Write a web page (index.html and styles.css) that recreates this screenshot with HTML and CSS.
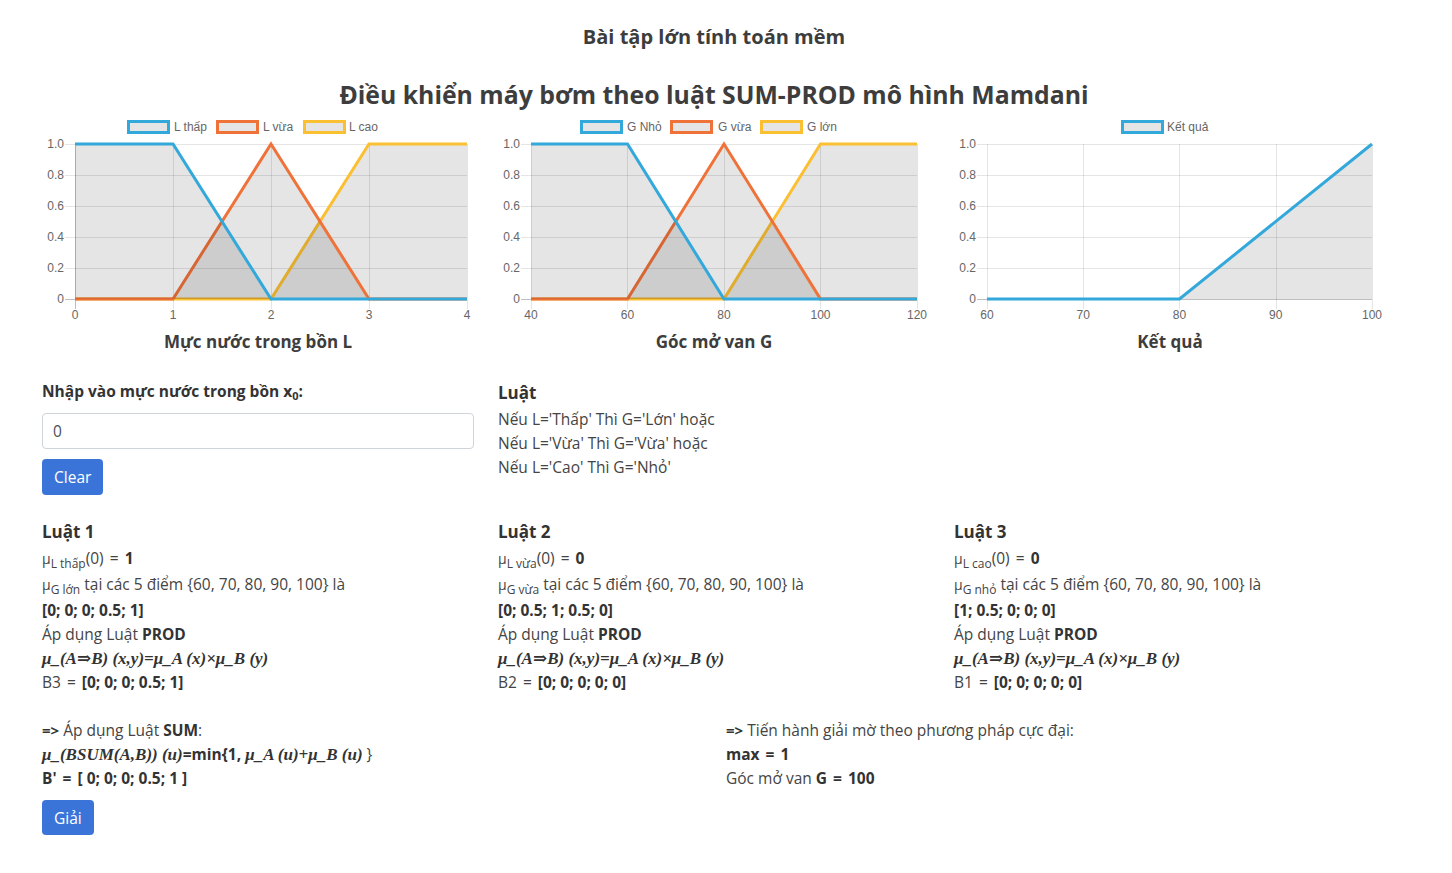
FILE: index.html
```html
<!DOCTYPE html>
<html lang="vi">
<head>
<meta charset="utf-8">
<title>Bài tập lớn tính toán mềm</title>
<link rel="stylesheet" href="styles.css">
</head>
<body>
<div class="page">
  <h5 class="title">Bài tập lớn tính toán mềm</h5>
  <h3 class="main-title">Điều khiển máy bơm theo luật SUM-PROD mô hình Mamdani</h3>

  <div class="row three charts">
    <div class="col">
      <svg class="chart" width="432" height="214" viewBox="0 0 432 214">
        <g class="grid">
          <line x1="23" y1="27.5" x2="425" y2="27.5"/>
          <line x1="23" y1="58.5" x2="425" y2="58.5"/>
          <line x1="23" y1="89.5" x2="425" y2="89.5"/>
          <line x1="23" y1="120.5" x2="425" y2="120.5"/>
          <line x1="23" y1="151.5" x2="425" y2="151.5"/>
          <line x1="131.5" y1="27" x2="131.5" y2="192"/>
          <line x1="229.5" y1="27" x2="229.5" y2="192"/>
          <line x1="327.5" y1="27" x2="327.5" y2="192"/>
          <line x1="425.5" y1="27" x2="425.5" y2="192"/>
        </g>
        <g class="zero">
          <line x1="23" y1="182.5" x2="425" y2="182.5"/>
          <line x1="33.5" y1="27" x2="33.5" y2="192"/>
        </g>
        <g class="ylab">
          <text x="22" y="31">1.0</text><text x="22" y="62">0.8</text><text x="22" y="93">0.6</text>
          <text x="22" y="124">0.4</text><text x="22" y="155">0.2</text><text x="22" y="186">0</text>
        </g>
        <g class="xlab">
          <text x="33" y="202">0</text><text x="131" y="202">1</text><text x="229" y="202">2</text>
          <text x="327" y="202">3</text><text x="425" y="202">4</text>
        </g>
        <path class="fill" d="M33,182 L229,182 L327,27 L425,27 L425,182 Z"/>
        <path class="ln yellow" d="M33,182 L229,182 L327,27 L425,27"/>
        <path class="fill" d="M33,182 L131,182 L229,27 L327,182 L425,182 Z"/>
        <path class="ln orange" d="M33,182 L131,182 L229,27 L327,182 L425,182"/>
        <path class="fill" d="M33,182 L33,27 L131,27 L229,182 L425,182 Z"/>
        <path class="ln blue" d="M33,27 L131,27 L229,182 L425,182"/>
        <g class="legend">
          <rect class="box blue" x="86.5" y="4.5" width="40" height="11"/><text x="132" y="14">L thấp</text>
          <rect class="box orange" x="175.5" y="4.5" width="40" height="11"/><text x="221" y="14">L vừa</text>
          <rect class="box yellow" x="262.5" y="4.5" width="40" height="11"/><text x="307" y="14">L cao</text>
        </g>
      </svg>
      <h5 class="chart-title">Mực nước trong bồn L</h5>
    </div>

    <div class="col">
      <svg class="chart" width="432" height="214" viewBox="0 0 432 214">
        <g class="grid">
          <line x1="23" y1="27.5" x2="419" y2="27.5"/>
          <line x1="23" y1="58.5" x2="419" y2="58.5"/>
          <line x1="23" y1="89.5" x2="419" y2="89.5"/>
          <line x1="23" y1="120.5" x2="419" y2="120.5"/>
          <line x1="23" y1="151.5" x2="419" y2="151.5"/>
          <line x1="33.5" y1="27" x2="33.5" y2="192"/>
          <line x1="129.5" y1="27" x2="129.5" y2="192"/>
          <line x1="226.5" y1="27" x2="226.5" y2="192"/>
          <line x1="322.5" y1="27" x2="322.5" y2="192"/>
          <line x1="419.5" y1="27" x2="419.5" y2="192"/>
        </g>
        <g class="zero">
          <line x1="23" y1="182.5" x2="419" y2="182.5"/>
        </g>
        <g class="ylab">
          <text x="22" y="31">1.0</text><text x="22" y="62">0.8</text><text x="22" y="93">0.6</text>
          <text x="22" y="124">0.4</text><text x="22" y="155">0.2</text><text x="22" y="186">0</text>
        </g>
        <g class="xlab">
          <text x="33" y="202">40</text><text x="129.5" y="202">60</text><text x="226" y="202">80</text>
          <text x="322.5" y="202">100</text><text x="419" y="202">120</text>
        </g>
        <path class="fill" d="M33,182 L226,182 L322.5,27 L419,27 L419,182 Z"/>
        <path class="ln yellow" d="M33,182 L226,182 L322.5,27 L419,27"/>
        <path class="fill" d="M33,182 L129.5,182 L226,27 L322.5,182 L419,182 Z"/>
        <path class="ln orange" d="M33,182 L129.5,182 L226,27 L322.5,182 L419,182"/>
        <path class="fill" d="M33,182 L33,27 L129.5,27 L226,182 L419,182 Z"/>
        <path class="ln blue" d="M33,27 L129.5,27 L226,182 L419,182"/>
        <g class="legend">
          <rect class="box blue" x="83.5" y="4.5" width="40" height="11"/><text x="129" y="14">G Nhỏ</text>
          <rect class="box orange" x="173.5" y="4.5" width="40" height="11"/><text x="220" y="14">G vừa</text>
          <rect class="box yellow" x="263.5" y="4.5" width="40" height="11"/><text x="309" y="14">G lớn</text>
        </g>
      </svg>
      <h5 class="chart-title">Góc mở van G</h5>
    </div>

    <div class="col">
      <svg class="chart" width="432" height="214" viewBox="0 0 432 214">
        <g class="grid">
          <line x1="23" y1="27.5" x2="418" y2="27.5"/>
          <line x1="23" y1="58.5" x2="418" y2="58.5"/>
          <line x1="23" y1="89.5" x2="418" y2="89.5"/>
          <line x1="23" y1="120.5" x2="418" y2="120.5"/>
          <line x1="23" y1="151.5" x2="418" y2="151.5"/>
          <line x1="33.5" y1="27" x2="33.5" y2="192"/>
          <line x1="129.5" y1="27" x2="129.5" y2="192"/>
          <line x1="225.5" y1="27" x2="225.5" y2="192"/>
          <line x1="322.5" y1="27" x2="322.5" y2="192"/>
          <line x1="418.5" y1="27" x2="418.5" y2="192"/>
        </g>
        <g class="zero">
          <line x1="23" y1="182.5" x2="418" y2="182.5"/>
        </g>
        <g class="ylab">
          <text x="22" y="31">1.0</text><text x="22" y="62">0.8</text><text x="22" y="93">0.6</text>
          <text x="22" y="124">0.4</text><text x="22" y="155">0.2</text><text x="22" y="186">0</text>
        </g>
        <g class="xlab">
          <text x="33" y="202">60</text><text x="129.25" y="202">70</text><text x="225.5" y="202">80</text>
          <text x="321.75" y="202">90</text><text x="418" y="202">100</text>
        </g>
        <path class="fill" d="M33,182 L225.5,182 L418,27 L418,182 Z"/>
        <path class="ln blue" d="M33,182 L225.5,182 L418,27"/>
        <g class="legend">
          <rect class="box blue" x="168.5" y="4.5" width="40" height="11"/><text x="213" y="14">Kết quả</text>
        </g>
      </svg>
      <h5 class="chart-title">Kết quả</h5>
    </div>
  </div>

  <div class="row three input-row">
    <div class="col">
      <label class="lbl" for="x0">Nhập vào mực nước trong bồn x<sub>0</sub>:</label>
      <input id="x0" class="form-control" type="text" value="0">
      <button class="btn" type="button">Clear</button>
    </div>
    <div class="col">
      <h5 class="sec">Luật</h5>
      <div class="line">Nếu L='Thấp' Thì G='Lớn' hoặc</div>
      <div class="line">Nếu L='Vừa' Thì G='Vừa' hoặc</div>
      <div class="line">Nếu L='Cao' Thì G='Nhỏ'</div>
    </div>
    <div class="col"></div>
  </div>

  <div class="row three rules">
    <div class="col">
      <h5 class="sec">Luật 1</h5>
      <div class="line tall"><span class="mu">μ</span><sub>L thấp</sub>(0) <span class="eq">=</span> <b>1</b></div>
      <div class="line tall"><span class="mu">μ</span><sub>G lớn</sub> tại các 5 điểm {60, 70, 80, 90, 100} là</div>
      <div class="line"><b>[0; 0; 0; 0.5; 1]</b></div>
      <div class="line">Áp dụng Luật <b>PROD</b></div>
      <div class="line"><span class="math">μ_(A⇒B) (x,y)=μ_A (x)×μ_B (y)</span></div>
      <div class="line">B3 <span class="eq">=</span> <b>[0; 0; 0; 0.5; 1]</b></div>
    </div>
    <div class="col">
      <h5 class="sec">Luật 2</h5>
      <div class="line tall"><span class="mu">μ</span><sub>L vừa</sub>(0) <span class="eq">=</span> <b>0</b></div>
      <div class="line tall"><span class="mu">μ</span><sub>G vừa</sub> tại các 5 điểm {60, 70, 80, 90, 100} là</div>
      <div class="line"><b>[0; 0.5; 1; 0.5; 0]</b></div>
      <div class="line">Áp dụng Luật <b>PROD</b></div>
      <div class="line"><span class="math">μ_(A⇒B) (x,y)=μ_A (x)×μ_B (y)</span></div>
      <div class="line">B2 <span class="eq">=</span> <b>[0; 0; 0; 0; 0]</b></div>
    </div>
    <div class="col">
      <h5 class="sec">Luật 3</h5>
      <div class="line tall"><span class="mu">μ</span><sub>L cao</sub>(0) <span class="eq">=</span> <b>0</b></div>
      <div class="line tall"><span class="mu">μ</span><sub>G nhỏ</sub> tại các 5 điểm {60, 70, 80, 90, 100} là</div>
      <div class="line"><b>[1; 0.5; 0; 0; 0]</b></div>
      <div class="line">Áp dụng Luật <b>PROD</b></div>
      <div class="line"><span class="math">μ_(A⇒B) (x,y)=μ_A (x)×μ_B (y)</span></div>
      <div class="line">B1 <span class="eq">=</span> <b>[0; 0; 0; 0; 0]</b></div>
    </div>
  </div>

  <div class="row two result">
    <div class="col">
      <div class="line"><b class="arrow">=&gt;</b> Áp dụng Luật <b>SUM</b>:</div>
      <div class="line"><span class="math">μ_(BSUM(A,B)) (u)</span><b>=min{1, </b><span class="math">μ_A (u)+μ_B (u)</span> }</div>
      <div class="line"><b>B' <span class="eq">=</span> [ 0; 0; 0; 0.5; 1 ]</b></div>
      <button class="btn btn-solve" type="button">Giải</button>
    </div>
    <div class="col">
      <div class="line"><b class="arrow">=&gt;</b> Tiến hành giải mờ theo phương pháp cực đại:</div>
      <div class="line"><b>max <span class="eq">=</span> 1</b></div>
      <div class="line">Góc mở van <b>G <span class="eq">=</span> 100</b></div>
    </div>
  </div>
</div>
</body>
</html>
```

FILE: styles.css
```css
* { box-sizing: border-box; }

body {
  margin: 0;
  background: #fff;
  color: #444;
  font-family: "Open Sans", "Noto Sans", Arial, sans-serif;
  font-size: 15.5px;
  line-height: 24px;
}

.page {
  padding-left: 30px;
  width: 1398px;
}

.title {
  margin: 25px 0 0;
  text-align: center;
  font-size: 20px;
  line-height: 24px;
  font-weight: 700;
  color: #3d3d3d;
}

.main-title {
  margin: 28px 0 0;
  text-align: center;
  font-size: 24.8px;
  line-height: 34px;
  font-weight: 700;
  color: #3d3d3d;
}

.row { display: grid; }
.row.three { grid-template-columns: repeat(3, 456px); }
.row.two { grid-template-columns: repeat(2, 684px); }
.col { padding: 0 12px; }

.charts { margin-top: 6px; }

.chart { display: block; }
.chart .grid line { stroke: rgba(0,0,0,0.1); stroke-width: 1; }
.chart .zero line { stroke: rgba(0,0,0,0.25); stroke-width: 1; }
.chart text {
  font-family: "Liberation Sans", Arial, sans-serif;
  font-size: 12px;
  fill: #666;
}
.chart .ylab text { text-anchor: end; }
.chart .xlab text { text-anchor: middle; }
.chart .fill { fill: rgba(0,0,0,0.1); stroke: none; }
.chart .ln { fill: none; stroke-width: 3; stroke-linejoin: miter; }
.chart .ln.blue { stroke: #33a8da; }
.chart .ln.orange { stroke: #ef7239; }
.chart .ln.yellow { stroke: #fbbf32; }
.chart .box { fill: rgba(0,0,0,0.1); stroke-width: 3; }
.chart .box.blue { stroke: #33a8da; }
.chart .box.orange { stroke: #ef7239; }
.chart .box.yellow { stroke: #fbbf32; }

.chart-title {
  margin: 0;
  text-align: center;
  font-size: 17px;
  line-height: 22px;
  font-weight: 700;
  color: #3d3d3d;
}

.input-row { margin-top: 26px; }

.lbl {
  display: block;
  font-weight: 700;
  color: #333;
  line-height: 24px;
}
.lbl sub { font-size: 11px; line-height: 0; vertical-align: -3px; }

.form-control {
  display: block;
  width: 100%;
  height: 36px;
  margin-top: 10px;
  padding: 6px 10px;
  border: 1px solid #ced4da;
  border-radius: 4px;
  font-family: inherit;
  font-size: 15.5px;
  color: #495057;
  background: #fff;
}

.btn {
  display: block;
  margin-top: 10px;
  height: 36px;
  padding: 0 12px;
  border: none;
  border-radius: 4px;
  background: #3b74d9;
  color: #fff;
  font-family: inherit;
  font-size: 15.5px;
  cursor: pointer;
}
.btn-solve { height: 35px; }

.sec {
  margin: 0;
  font-size: 17px;
  line-height: 28px;
  font-weight: 700;
  color: #333;
}

.line { height: 24px; line-height: 24px; white-space: nowrap; }
.line.tall { height: 26px; line-height: 24px; }
.line b { color: #333; font-weight: 700; }
.line sub { font-size: 12px; line-height: 0; vertical-align: -4px; }
.mu { font-size: 14px; }
.eq { margin: 0 2px; }

.math {
  font-family: "Liberation Serif", "DejaVu Serif", serif;
  font-style: italic;
  font-weight: 700;
  font-size: 17px;
  line-height: 1;
  color: #333;
}

.rules { margin-top: 23px; }
.result { margin-top: 24px; }
.arrow { font-size: 15px; }
```
